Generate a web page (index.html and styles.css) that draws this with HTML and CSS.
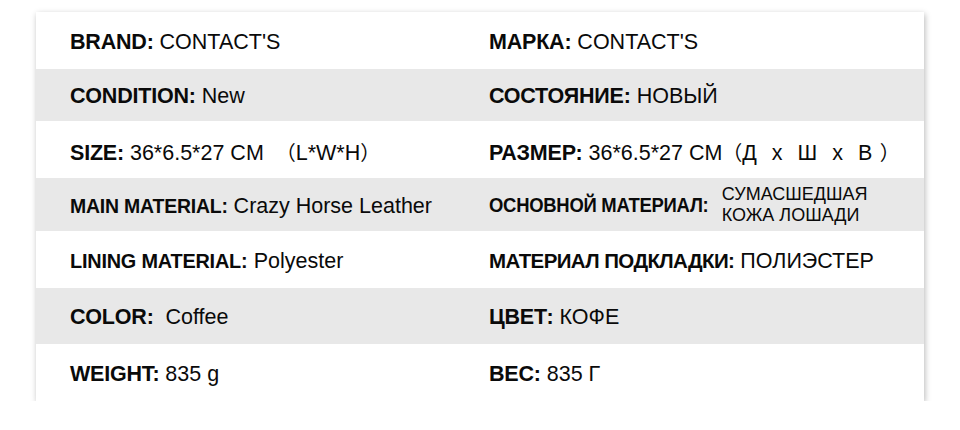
FILE: index.html
```html
<!DOCTYPE html>
<html lang="ru">
<head>
<meta charset="utf-8">
<link rel="stylesheet" href="styles.css">
</head>
<body>
<div class="sheet">
  <div class="row r1">
    <div class="cell"><b>BRAND:</b> CONTACT'S</div>
    <div class="cell"><b>МАРКА:</b> CONTACT'S</div>
  </div>
  <div class="row r2 gray">
    <div class="cell"><b>CONDITION:</b> New</div>
    <div class="cell"><b>СОСТОЯНИЕ:</b> НОВЫЙ</div>
  </div>
  <div class="row r3">
    <div class="cell"><b>SIZE:</b> 36*6.5*27 CM &nbsp;<span class="cjk">（</span>L*W*H<span class="cjk">）</span></div>
    <div class="cell"><b>РАЗМЕР:</b> 36*6.5*27 CM<span class="cjk">（</span><span class="dims">Д&nbsp; x&nbsp; Ш&nbsp; x&nbsp; В&nbsp;</span><span class="cjk">）</span></div>
  </div>
  <div class="row r4 gray">
    <div class="cell"><b class="main">MAIN MATERIAL:</b> Crazy Horse Leather</div>
    <div class="cell split"><b class="condensed">ОСНОВНОЙ МАТЕРИАЛ:</b><span class="small">СУМАСШЕДШАЯ<br>КОЖА ЛОШАДИ</span></div>
  </div>
  <div class="row r5">
    <div class="cell"><b class="lining">LINING MATERIAL:</b> Polyester</div>
    <div class="cell"><b class="tight">МАТЕРИАЛ ПОДКЛАДКИ:</b> ПОЛИЭСТЕР</div>
  </div>
  <div class="row r6 gray">
    <div class="cell"><b>COLOR:</b>&nbsp; Coffee</div>
    <div class="cell"><b>ЦВЕТ:</b> КОФЕ</div>
  </div>
  <div class="row r7">
    <div class="cell"><b>WEIGHT:</b> 835 g</div>
    <div class="cell"><b>ВЕС:</b> 835 Г</div>
  </div>
</div>
</body>
</html>
```

FILE: styles.css
```css
html, body {
  margin: 0;
  padding: 0;
  background: #ffffff;
}
body {
  padding: 12px 36px 0 36px;
  font-family: "Liberation Sans", Arial, sans-serif;
  color: #0a0a0a;
}
.sheet {
  width: 888px;
  background: #ffffff;
  box-shadow: 1px 2px 6px rgba(0, 0, 0, 0.28);
}
.row {
  display: grid;
  grid-template-columns: 453px 1fr;
  align-items: center;
  font-size: 21.5px;
}
.row.gray {
  background: #e8e8e8;
}
.r1 { height: 57px; }
.r2 { height: 52px; }
.r3 { height: 57px; }
.r4 { height: 53px; }
.r5 { height: 57px; }
.r6 { height: 56px; }
.r7 { height: 57px; }
.cell {
  white-space: nowrap;
  padding-top: 3px;
}
.cell:first-child {
  padding-left: 34px;
}
.cell b {
  font-weight: bold;
  letter-spacing: -0.2px;
}
.cell b.main,
.cell b.lining,
.cell b.condensed {
  display: inline-block;
  transform-origin: left center;
}
.cell b.main {
  font-size: 21px;
  transform: scaleX(0.925);
  margin-right: -13px;
}
.cell b.lining {
  font-size: 21px;
  transform: scaleX(0.945);
  margin-right: -10px;
}
.cell b.condensed {
  font-size: 20.5px;
  letter-spacing: -0.3px;
  transform: scaleX(0.9);
  margin-right: -25px;
}
.cell b.tight {
  font-size: 20.5px;
  letter-spacing: -0.6px;
}
.cjk {
  font-family: "Noto Sans CJK SC", sans-serif;
  font-size: 20px;
}
.dims {
  word-spacing: 1.5px;
}
.split {
  display: flex;
  align-items: center;
  gap: 14px;
  padding-top: 0;
}
.small {
  font-size: 18px;
  line-height: 21px;
}
```
